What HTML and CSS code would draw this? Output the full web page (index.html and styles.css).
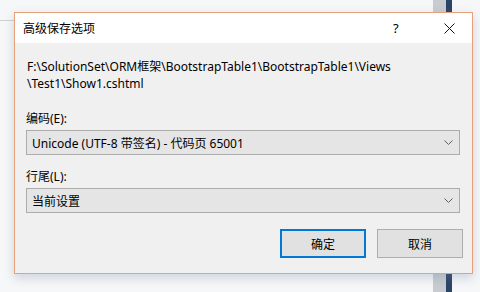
FILE: index.html
```html
<!DOCTYPE html>
<html lang="zh-CN">

<head>
    <meta charset="UTF-8">
    <title>高级保存选项</title>
    <link rel="stylesheet" href="styles.css">
</head>

<body>
    <div class="desk">
        <div class="desk-line"></div>
        <div class="desk-bar"></div>
        <div class="desk-bar dark"></div>

        <div class="dialog">
            <div class="title-bar">
                <span class="title">高级保存选项</span>
                <span class="help">?</span>
                <span class="close">
                    <svg width="11" height="11" viewBox="0 0 11 11">
                        <path d="M0.5 0.5 L10.5 10.5 M10.5 0.5 L0.5 10.5" stroke="#111" stroke-width="1" fill="none" />
                    </svg>
                </span>
            </div>

            <div class="dialog-body">
                <div class="file-path">F:\SolutionSet\ORM框架\BootstrapTable1\BootstrapTable1\Views<br>\Test1\Show1.cshtml</div>

                <div class="field-label first">编码(E):</div>
                <div class="combo">
                    <span>Unicode (UTF-8 带签名) - 代码页 65001</span>
                    <svg class="chevron" width="9" height="5" viewBox="0 0 9 5">
                        <path d="M0.5 0.5 L4.5 4.5 L8.5 0.5" stroke="#606060" fill="none" />
                    </svg>
                </div>

                <div class="field-label">行尾(L):</div>
                <div class="combo">
                    <span>当前设置</span>
                    <svg class="chevron" width="9" height="5" viewBox="0 0 9 5">
                        <path d="M0.5 0.5 L4.5 4.5 L8.5 0.5" stroke="#606060" fill="none" />
                    </svg>
                </div>

                <div class="buttons">
                    <button class="btn default">确定</button>
                    <button class="btn">取消</button>
                </div>
            </div>
        </div>
    </div>
</body>

</html>
```

FILE: styles.css
```css
* {
    margin: 0;
    padding: 0;
    box-sizing: border-box;
}

body {
    font-family: "Noto Sans", "Noto Sans CJK SC", sans-serif;
    font-size: 12px;
    color: #000;
    background: #f6f7f8;
}

.desk {
    position: relative;
    width: 480px;
    height: 292px;
    padding: 12px 0 0 14px;
    overflow: hidden;
}

/* 뒤쪽 창 흔적 */
.desk-line {
    position: absolute;
    left: 0;
    top: 20px;
    width: 14px;
    height: 1px;
    background: #d0d0d0;
}

.desk-bar {
    position: absolute;
    left: 433px;
    top: 0;
    width: 13px;
    height: 292px;
    background: #c8ccd0;
}

.desk-bar.dark {
    left: 446px;
    width: 6px;
    background: #2a4466;
}

.dialog {
    position: relative;
    width: 459px;
    height: 262px;
    border: 1px solid #e6a07a;
    background: #f0f0f0;
    box-shadow: 0 4px 10px rgba(110, 130, 160, 0.3);
    display: flex;
    flex-direction: column;
}

.title-bar {
    height: 30px;
    background: #fff;
    display: flex;
    align-items: center;
    padding-left: 8px;
}

.title {
    flex: 1;
    font-size: 12px;
}

.help {
    font-size: 13px;
    width: 12px;
    margin-right: 39px;
}

.close {
    display: flex;
    margin-right: 17px;
}

.dialog-body {
    flex: 1;
    padding: 15px 12px 0 11px;
}

.file-path {
    line-height: 17px;
    padding-left: 1px;
}

.field-label {
    line-height: 17px;
    margin-top: 13px;
    margin-bottom: 3px;
}

.field-label.first {
    margin-top: 18px;
}

.combo {
    height: 25px;
    border: 1px solid #acacac;
    background: #e5e5e5;
    display: flex;
    align-items: center;
    padding: 0 5px 0 5px;
}

.combo span {
    flex: 1;
}

.chevron {
    margin-right: 1px;
}

.buttons {
    display: flex;
    justify-content: flex-end;
    gap: 11px;
    margin-top: 16px;
    margin-right: -3px;
}

.btn {
    width: 86px;
    height: 29px;
    font-family: inherit;
    font-size: 12px;
    background: #e1e1e1;
    border: 1px solid #adadad;
    color: #000;
}

.btn.default {
    border: 2px solid #0078d7;
}
```
